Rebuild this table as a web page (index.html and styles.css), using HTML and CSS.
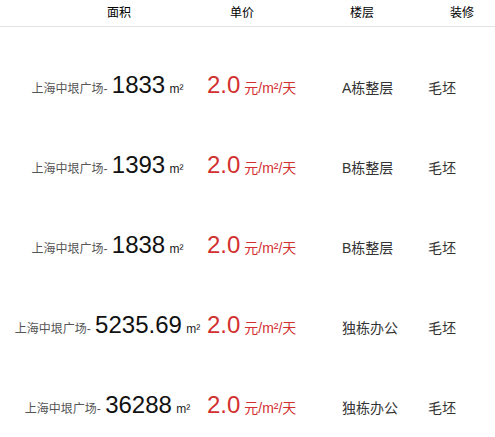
FILE: index.html
```html
<!DOCTYPE html>
<html lang="zh-CN">
<head>
    <meta charset="UTF-8">
    <meta name="viewport" content="width=device-width, initial-scale=1.0">
    <title>房源列表</title>
    <link rel="stylesheet" href="styles.css">
</head>
<body>
    <!-- 表头 -->
    <div class="list-head">
        <span class="head-area">面积</span>
        <span class="head-price">单价</span>
        <span class="head-floor">楼层</span>
        <span class="head-decor">装修</span>
    </div>

    <!-- 房源 -->
    <ul class="house-list">
        <li class="house-item">
            <div class="col-area"><span class="name">上海中垠广场-</span> <span class="num">1833</span> <span class="unit">m²</span></div>
            <div class="col-price"><span class="num">2.0</span> <span class="unit">元/m²/天</span></div>
            <div class="col-floor">A栋整层</div>
            <div class="col-decor">毛坯</div>
        </li>
        <li class="house-item">
            <div class="col-area"><span class="name">上海中垠广场-</span> <span class="num">1393</span> <span class="unit">m²</span></div>
            <div class="col-price"><span class="num">2.0</span> <span class="unit">元/m²/天</span></div>
            <div class="col-floor">B栋整层</div>
            <div class="col-decor">毛坯</div>
        </li>
        <li class="house-item">
            <div class="col-area"><span class="name">上海中垠广场-</span> <span class="num">1838</span> <span class="unit">m²</span></div>
            <div class="col-price"><span class="num">2.0</span> <span class="unit">元/m²/天</span></div>
            <div class="col-floor">B栋整层</div>
            <div class="col-decor">毛坯</div>
        </li>
        <li class="house-item">
            <div class="col-area"><span class="name">上海中垠广场-</span> <span class="num">5235.69</span> <span class="unit">m²</span></div>
            <div class="col-price"><span class="num">2.0</span> <span class="unit">元/m²/天</span></div>
            <div class="col-floor">独栋办公</div>
            <div class="col-decor">毛坯</div>
        </li>
        <li class="house-item">
            <div class="col-area"><span class="name">上海中垠广场-</span> <span class="num">36288</span> <span class="unit">m²</span></div>
            <div class="col-price"><span class="num">2.0</span> <span class="unit">元/m²/天</span></div>
            <div class="col-floor">独栋办公</div>
            <div class="col-decor">毛坯</div>
        </li>
    </ul>
</body>
</html>
```

FILE: styles.css
```css
body {
    font-family: "Liberation Sans", Arial, "Noto Sans CJK SC", sans-serif;
    margin: 0;
    padding: 0;
    background-color: #fff;
    color: #333;
}

.list-head {
    display: flex;
    height: 26px;
    line-height: 27px;
    padding-left: 107px;
    border-bottom: 1px solid #e2e2e2;
    font-size: 12px;
    color: #000;
}

.list-head span {
    width: 24px;
}

.head-price {
    margin-left: 99px;
}

.head-floor {
    margin-left: 96px;
}

.head-decor {
    margin-left: 76px;
}

.house-list {
    list-style-type: none;
    margin: 0;
    padding: 0 0 0 8px;
}

.house-item {
    display: flex;
    align-items: baseline;
    height: 80px;
    box-sizing: border-box;
    padding-top: 44px;
    line-height: 28px;
}

.col-area {
    width: 199px;
    text-align: center;
    font-size: 12px;
}

.col-area .name {
    color: #555;
}

.col-area .num {
    font-size: 24px;
    color: #111;
    margin: 0 1px;
}

.col-area .unit {
    color: #222;
}

.col-price {
    width: 135px;
    color: #d2302f;
    font-size: 14px;
}

.col-price .num {
    font-size: 24px;
}

.col-floor {
    width: 86px;
    font-size: 14px;
}

.col-decor {
    font-size: 14px;
}
```
